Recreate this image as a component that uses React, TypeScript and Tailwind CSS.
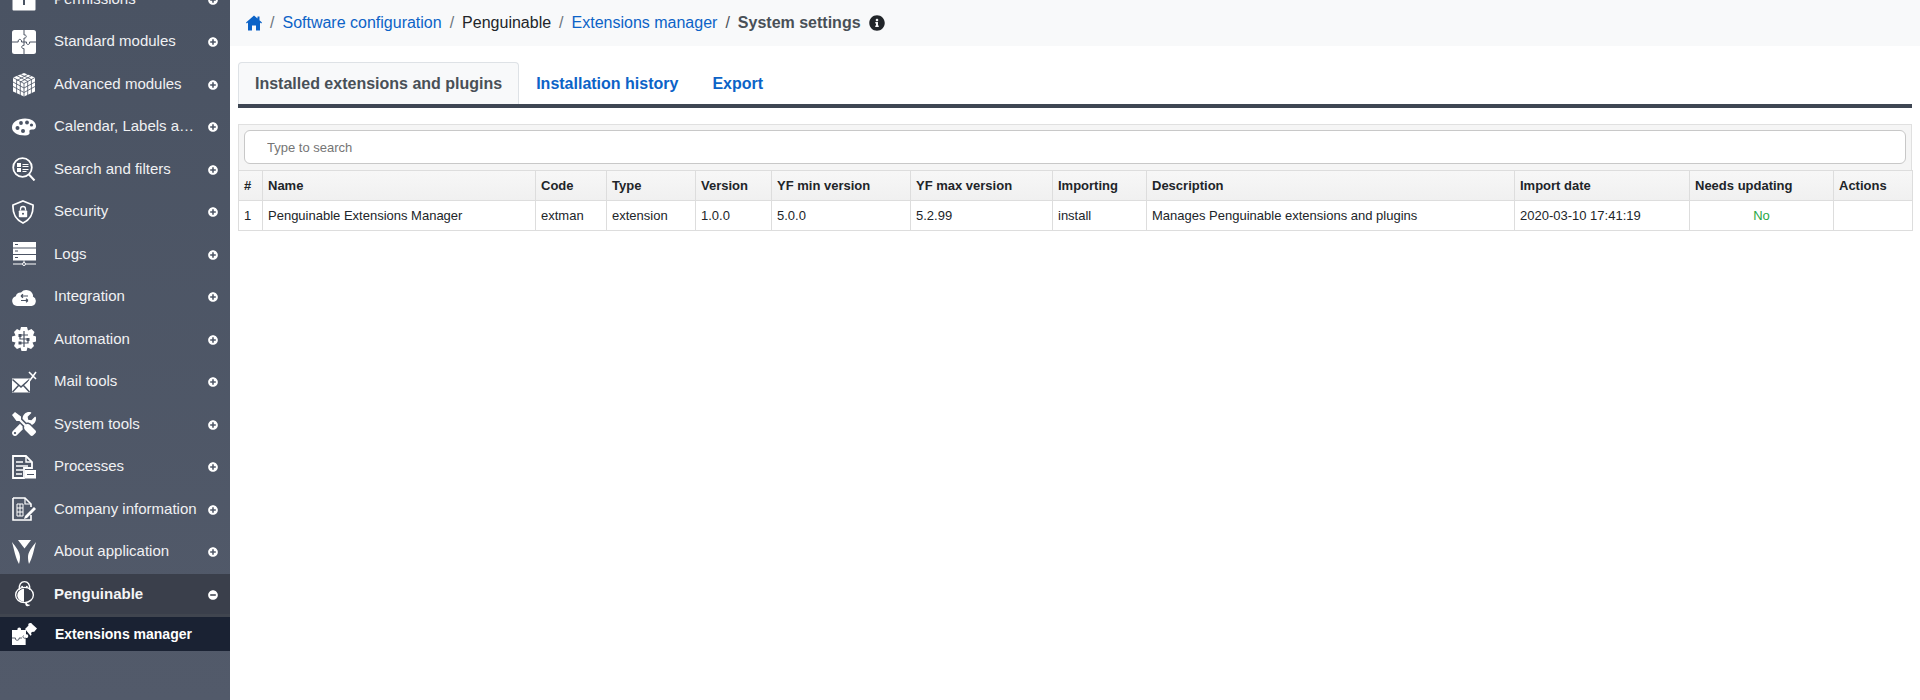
import React from "react";
import { FaInfoCircle, FaPlusCircle, FaMinusCircle, FaTools } from "react-icons/fa";

const BG = "#4a5363";

const Svg = ({ children, className = "w-[24px] h-[24px]" }: { children: React.ReactNode; className?: string }) => (
  <svg viewBox="0 0 24 24" className={className} fill="#fff">{children}</svg>
);

const IconHome = () => (
  <svg viewBox="0 0 16 16" className="h-[16px] w-[16px]" fill="#0c63c7">
    <path d="M8 0.500 11.500 3.500V1.500h2v3.700L16 7.500l-.8.900L14 7.400V15.500h-4v-5H6v5H2V7.400L.8 8.400 0 7.500z" />
  </svg>
);

const IconPermissions = () => (
  <Svg>
    <rect x="0.500" y="0.500" width="23" height="23" rx="1" />
    <circle cx="12" cy="9" r="2.600" fill={BG} />
    <rect x="11" y="10" width="2" height="8" fill={BG} />
  </Svg>
);
const IconPuzzle = () => (
  <Svg>
    <rect x="0" y="0" width="24" height="24" rx="2.500" />
    <path d="M12 0v5c3-.7 3 3.700 0 3v4H9.500c.7-3.500-4-3.500-3.300 0H0M12 12h2.500c-.7 3.300 3.800 3.300 3.100 0H24M12 12v3.500c-3-.7-3 3.700 0 3V24" fill="none" stroke={BG} strokeWidth="1" />
  </Svg>
);
const IconCube = () => (
  <svg viewBox="0 0 24 24" className="h-[25px] w-[24px]">
    <path d="M12 0.500 23 5v14l-11 5L1 19V5z" fill="#fff" />
    <path d="M12 11v13M1 5l11 6 11-6M5 3.200l11 5.800M8.500 2l11 5M16 1.800 5 8M19.500 3.200 8.500 9.500M4.600 7v14M8.300 9v14M15.700 9v14M19.400 7v14M1 9.500l11 6 11-6M1 14l11 6 11-6" fill="none" stroke={BG} strokeWidth="0.800" />
  </svg>
);
const IconPalette = () => (
  <svg viewBox="0 0 24 18" className="h-[18px] w-[24px]">
    <path d="M13 0.500C19 0.500 24 3.500 24 8c0 3-2 3.500-4 3.500-2.500 0-3 1-2.500 2.800.6 2-1 3.200-4.500 3.200C5 17.500 0 14 0 9.500 0 4 6 .5 13 .5z" fill="#fff" />
    <circle cx="5.500" cy="10" r="2" fill={BG} />
    <circle cx="9" cy="5" r="1.900" fill={BG} />
    <circle cx="15" cy="4.500" r="1.900" fill={BG} />
    <circle cx="19.500" cy="7" r="1.600" fill={BG} />
    <circle cx="11" cy="13" r="2" fill={BG} />
  </svg>
);
const IconSearchList = () => (
  <svg viewBox="0 0 24 24" className="h-[24px] w-[24px]">
    <circle cx="10.500" cy="10.500" r="9.300" fill="none" stroke="#fff" strokeWidth="1.800" />
    <path d="M17 17.500 22.500 23.500" stroke="#fff" strokeWidth="2" />
    <rect x="5" y="6" width="4" height="4" fill="#fff" />
    <rect x="5" y="11" width="4" height="4" fill="#fff" />
    <path d="M10.500 7.500h6M10.500 9.500h6M10.500 12.500h6M10.500 14.500h4" stroke="#fff" strokeWidth="1" />
  </svg>
);
const IconShield = () => (
  <svg viewBox="0 0 22 24" className="h-[24px] w-[22px]">
    <path d="M11 1 21 5c.4 8-1.500 14-10 18C2.500 19 .6 13 1 5z" fill="none" stroke="#fff" strokeWidth="1.800" />
    <rect x="6.800" y="10.500" width="8.400" height="6.800" rx="0.800" fill="#fff" />
    <path d="M8.500 10.500V9a2.500 2.500 0 0 1 5 0v1.500" fill="none" stroke="#fff" strokeWidth="1.300" />
    <circle cx="11" cy="13.800" r="1" fill={BG} />
  </svg>
);
const IconLogs = () => (
  <Svg>
    <rect x="1" y="0" width="23" height="5.500" />
    <rect x="1" y="6.500" width="23" height="5.500" />
    <rect x="1" y="13" width="23" height="5.500" />
    <path d="M3 2.500h3M3 9h3M3 15.500h3" stroke={BG} strokeWidth="1" />
    <path d="M1 22h9M14 22h10M12 18.500v2" stroke="#fff" strokeWidth="1" />
    <circle cx="12" cy="22" r="1.500" fill="none" stroke="#fff" strokeWidth="1" />
  </Svg>
);
const IconCloud = () => (
  <svg viewBox="0 0 24 18" className="h-[18px] w-[24px]">
    <path d="M5 18a5 5 0 0 1-1.200-9.800A5 5 0 0 1 9 4.500 7 7 0 0 1 21 7c0 .6 0 1-.1 1.500A5 5 0 0 1 19.500 18z" fill="#fff" />
    <path d="M9 8h7M9 8l2-1.800M9 8l2 1.800M16 12.500H9M16 12.500l-2-1.800M16 12.500l-2 1.800" stroke={BG} strokeWidth="1.200" fill="none" />
  </svg>
);
const IconGear = () => (
  <Svg>
    <path d="M9 0h6l1 3.500 3.500-1.500 3 3-1.500 3.500L24 9.500v5l-3.500 1 1.500 3.500-3 3-3.500-1.500-1 3.500H9.500l-1-3.500L5 22l-3-3 1.500-3.500L0 14.500v-5l3.500-1L2 5l3-3 3 1.500z" />
    <path d="M12 4v16M8 8h8M8 8v4h8M16 12v4H8" fill="none" stroke={BG} strokeWidth="1.200" />
    <rect x="6.500" y="7" width="3" height="3" fill={BG} />
    <rect x="14.500" y="11" width="3" height="3" fill={BG} />
    <rect x="6.500" y="14.500" width="3" height="3" fill={BG} />
  </Svg>
);
const IconMail = () => (
  <svg viewBox="0 0 25 24" className="h-[24px] w-[25px]">
    <rect x="0" y="8.500" width="18" height="14" fill="#fff" />
    <path d="M0.500 9.500 9 17l8.500-7.500M0.500 22 7 15M17.500 22 11 15" fill="none" stroke={BG} strokeWidth="1.500" />
    <path d="M16 13 24 2M17 2 24 9" stroke="#fff" strokeWidth="1.600" />
  </svg>
);
const IconDoc = () => (
  <Svg>
    <path d="M1 1h13l6 6v6h-8v10H1z" fill="none" stroke="#fff" strokeWidth="1.800" />
    <path d="M14 1v6h6" fill="none" stroke="#fff" strokeWidth="1.400" />
    <path d="M4 7h7M4 11h12M4 15h7M4 19h6" stroke="#fff" strokeWidth="1.500" />
    <rect x="13" y="15" width="11" height="8.500" fill="#fff" />
    <path d="M15 19.500h7" stroke={BG} strokeWidth="1" />
  </Svg>
);
const IconCompany = () => (
  <Svg>
    <path d="M1 1h12l6 6v3M19 18v5H1V1" fill="none" stroke="#fff" strokeWidth="1.600" />
    <path d="M13 1v6h6" fill="none" stroke="#fff" strokeWidth="1.200" />
    <path d="M5 7h6v12H5zM5 11h6M5 15h6M8 7v12" fill="none" stroke="#fff" strokeWidth="1" />
    <path d="M13 19l9-9 2 2-9 9-3 1z" fill="#fff" />
  </Svg>
);
const IconY = () => (
  <svg viewBox="0 0 24 24" className="h-[24px] w-[24px]">
    <path d="M6 0h13l-6.500 8.500z" fill="#fff" />
    <path d="M0 2c4 5 8 10 8 15 0 3-.5 5-1 7C3.500 18 2 9 0 2z" fill="#fff" />
    <path d="M24 2c-4 5-8 10-8 15 0 3 .5 5 1 7 3.500-6 5-15 7-22z" fill="#fff" />
  </svg>
);
const IconPenguin = () => (
  <svg viewBox="0 0 22 29" className="h-[29px] w-[21px]">
    <path d="M5.500 9.500C5 4 7.500 1 11 1s6 3 5.500 8.500" fill="none" stroke="#fff" strokeWidth="1.500" />
    <ellipse cx="8.500" cy="6.500" rx="1" ry="1.200" fill="#fff" />
    <ellipse cx="13.500" cy="6.500" rx="1" ry="1.200" fill="#fff" />
    <ellipse cx="11" cy="15" rx="9.300" ry="8" fill="none" stroke="#fff" strokeWidth="1.400" />
    <path d="M10.500 8.500C6 9 3.500 12 3.500 15.500s3 6 7 6.500z" fill="#fff" />
    <path d="M11.500 22.500c.5 1.500 0 3 1.500 4 2 .8 3.500-.3 4-1.500-1.500.5-3 0-3.500-1.500l.5-1.500z" fill="#fff" />
  </svg>
);
const IconExt = () => (
  <svg viewBox="0 0 25 23" className="h-[23px] w-[25px]">
    <path d="M0 7h5.500c-1-3.500 4.500-3.500 3.500 0H14v4.500c3-1.200 3 4.500 0 3.500v7H0z" fill="#fff" />
    <path d="M14 22v-7c-2 1-4-1-2.500-2.500M0 15h3.500c-1 3 4.500 3 3.500 0h3" fill="none" stroke="#1a2233" strokeWidth="0.700" />
    <path d="M13 6 16.500 2.500c-1.200-2.500 2.800-3.500 3.800-1.300L25 5.500 22 9c-2-1-3.800 1-2.300 2.800l-1.200 1z" fill="#fff" />
  </svg>
);

type Item = { label: string; icon: React.ReactNode };
const items: Item[] = [
  { label: "Permissions", icon: <IconPermissions /> },
  { label: "Standard modules", icon: <IconPuzzle /> },
  { label: "Advanced modules", icon: <IconCube /> },
  { label: "Calendar, Labels and Fields", icon: <IconPalette /> },
  { label: "Search and filters", icon: <IconSearchList /> },
  { label: "Security", icon: <IconShield /> },
  { label: "Logs", icon: <IconLogs /> },
  { label: "Integration", icon: <IconCloud /> },
  { label: "Automation", icon: <IconGear /> },
  { label: "Mail tools", icon: <IconMail /> },
  { label: "System tools", icon: <FaTools className="h-[24px] w-[24px] text-white" /> },
  { label: "Processes", icon: <IconDoc /> },
  { label: "Company information", icon: <IconCompany /> },
  { label: "About application", icon: <IconY /> },
];

const headers: { t: string; w: string }[] = [
  { t: "#", w: "w-[24px]" },
  { t: "Name", w: "w-[273px]" },
  { t: "Code", w: "w-[71px]" },
  { t: "Type", w: "w-[89px]" },
  { t: "Version", w: "w-[76px]" },
  { t: "YF min version", w: "w-[139px]" },
  { t: "YF max version", w: "w-[142px]" },
  { t: "Importing", w: "w-[94px]" },
  { t: "Description", w: "w-[368px]" },
  { t: "Import date", w: "w-[175px]" },
  { t: "Needs updating", w: "w-[144px]" },
  { t: "Actions", w: "w-[79px]" },
];
const row = ["1", "Penguinable Extensions Manager", "extman", "extension", "1.0.0", "5.0.0", "5.2.99", "install", "Manages Penguinable extensions and plugins", "2020-03-10 17:41:19"];

export default function App() {
  return (
    <div className="flex h-[700px] w-[1920px] overflow-hidden bg-white font-['Liberation_Sans',Arial,sans-serif]">
      <aside className="w-[230px] shrink-0 overflow-hidden bg-gradient-to-b from-[#4a5363] to-[#525a6a]">
        <div className="-mt-[22.25px]">
          {items.map((it) => (
            <div key={it.label} className="flex h-[42.5px] items-center text-[15px] text-[#f0f1f3]">
              <span className="flex w-[54px] shrink-0 items-center pl-[12px]">{it.icon}</span>
              <span className="w-[144px] truncate">{it.label}</span>
              <FaPlusCircle className="ml-[10px] mt-[1px] h-[10px] w-[10px] text-white" />
            </div>
          ))}
          <div className="mt-[1.25px] flex h-[40px] items-center bg-[#3a3f4b] text-[15px] font-bold text-[#f4f5f6]">
            <span className="flex w-[54px] shrink-0 items-center pl-[14px]"><IconPenguin /></span>
            <span className="w-[144px] truncate">Penguinable</span>
            <FaMinusCircle className="ml-[10px] mt-[1px] h-[10px] w-[10px] text-white" />
          </div>
          <div className="h-[3px] bg-[#40454f]" />
          <div className="flex h-[34px] items-center bg-[#1a2233] text-[14px] font-bold text-white">
            <span className="flex w-[55px] shrink-0 items-center pl-[12px]"><IconExt /></span>
            <span>Extensions manager</span>
          </div>
        </div>
      </aside>
      <main className="min-w-0 flex-1">
        <nav className="flex h-[46px] items-center bg-[#f8f9fa] pl-[16px] text-[16px] text-[#212529]">
          <IconHome />
          <span className="mx-[8px] text-[#6c757d]">/</span>
          <a className="text-[#0c63c7]">Software configuration</a>
          <span className="mx-[8px] text-[#6c757d]">/</span>
          <span>Penguinable</span>
          <span className="mx-[8px] text-[#6c757d]">/</span>
          <a className="text-[#0c63c7]">Extensions manager</a>
          <span className="mx-[8px] text-[#495057]">/</span>
          <span className="font-bold text-[#495057]">System settings</span>
          <FaInfoCircle className="-mt-[1px] ml-[8px] h-[16px] w-[16px] text-[#212529]" />
        </nav>
        <div className="px-[8px]">
          <div className="mt-[16px] flex h-[46px] items-stretch border-b-[4px] border-[#3e4653]">
            <div className="flex items-center rounded-t-[4px] border border-b-0 border-[#dee2e6] bg-[#f8f9fa] px-[16px] text-[16px] font-bold text-[#495057]">
              Installed extensions and plugins
            </div>
            <div className="flex items-center pl-[17px] pr-[19px] pt-[1px] text-[16px] font-bold text-[#0c63c7]">Installation history</div>
            <div className="flex items-center px-[15px] pt-[1px] text-[16px] font-bold text-[#0c63c7]">Export</div>
          </div>
          <div className="mt-[16px] h-[46px] border border-b-0 border-[#e0e0e0] bg-[#f5f5f5] px-[5px] pt-[5px]">
            <input
              placeholder="Type to search"
              className="h-[34px] w-full rounded-[6px] border border-[#c8c8c8] bg-white pl-[22px] text-[13px] placeholder:text-[#757575]"
            />
          </div>
          <table className="w-full table-fixed border-collapse bg-white text-[13px] text-[#212529]">
            <colgroup>
              {headers.map((h) => <col key={h.t} className={h.w} />)}
            </colgroup>
            <thead>
              <tr className="h-[30px] bg-gradient-to-b from-[#f7f7f7] to-[#f0f0f0]">
                {headers.map((h) => (
                  <th key={h.t} className="border border-[#ddd] px-[5px] text-left font-bold">{h.t}</th>
                ))}
              </tr>
            </thead>
            <tbody>
              <tr className="h-[30px]">
                {row.map((c, i) => <td key={i} className="border border-[#ddd] px-[5px]">{c}</td>)}
                <td className="border border-[#ddd] px-[5px] text-center text-[#28a745]">No</td>
                <td className="border border-[#ddd]" />
              </tr>
            </tbody>
          </table>
        </div>
      </main>
    </div>
  );
}
